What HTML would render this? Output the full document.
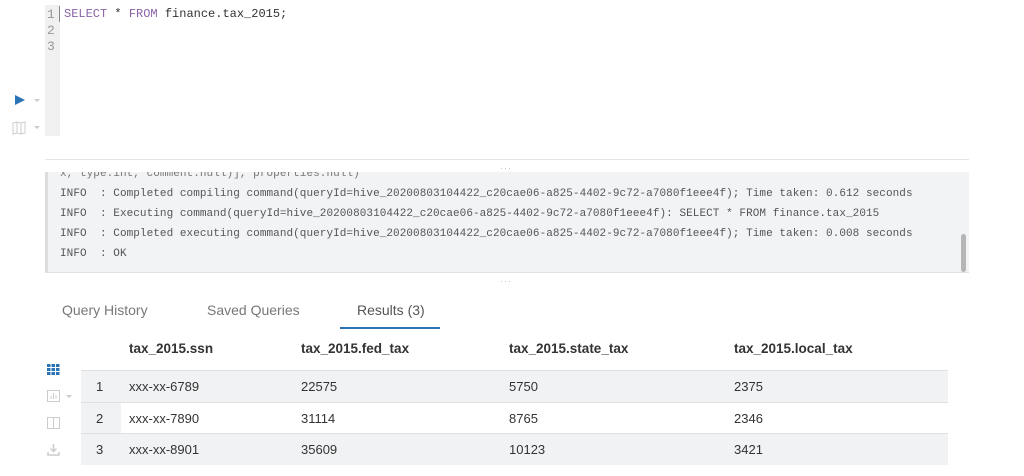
<!DOCTYPE html>
<html><head><style>
body{margin:0;width:1024px;height:476px;background:#fff;position:relative;overflow:hidden;font-family:"Liberation Sans",sans-serif}
.a{position:absolute}
.mono{font-family:"Liberation Mono",monospace}
.log div{position:absolute;left:12px;font-size:11px;letter-spacing:0.06px;color:#555;white-space:pre}
.row{position:absolute;left:81px;width:867px;height:31px;font-size:13px;color:#333}
.row span{position:absolute;top:8px}
</style></head><body>
<div class="a" style="left:45px;top:5px;width:15px;height:131px;background:#f0f0f0"></div>
<div class="a" style="left:59px;top:6px;width:1px;height:16px;background:#888"></div>
<div class="a mono" style="left:47px;top:7px;font-size:13px;line-height:16px;color:#999">1<br>2<br>3</div>
<div class="a mono" style="left:64px;top:7px;font-size:12px;color:#333;white-space:pre"><span style="color:#8a62a6">SELECT</span> * <span style="color:#8a62a6">FROM</span> finance.tax_2015;</div>
<svg class="a" style="left:14px;top:94px" width="28" height="12"><path d="M1 1 L11 6 L1 11Z" fill="#2a73b5"/><path d="M20 5 L26 5 L23 8Z" fill="#ccc"/></svg>
<svg class="a" style="left:12px;top:121px" width="30" height="14"><path d="M1 2 L5 1 L9 2 L13 1 L13 12 L9 13 L5 12 L1 13Z M5 1 L5 12 M9 2 L9 13" fill="none" stroke="#ccc"/><path d="M22 5 L28 5 L25 8Z" fill="#ccc"/></svg>
<div class="a" style="left:45px;top:159px;width:924px;height:1px;background:#e6e6e6"></div>
<div class="a" style="left:500px;top:163px;font-size:9px;color:#bbb;letter-spacing:1px">···</div>
<div class="a log mono" style="left:45px;top:172px;width:924px;height:100px;background:#f2f3f5;border-left:3px solid #ddd;overflow:hidden;box-sizing:border-box">
<div style="top:-4px;color:#777">x, type:int, comment:null)], properties:null)</div>
<div style="top:16px">INFO  : Completed compiling command(queryId=hive_20200803104422_c20cae06-a825-4402-9c72-a7080f1eee4f); Time taken: 0.612 seconds</div>
<div style="top:36px">INFO  : Executing command(queryId=hive_20200803104422_c20cae06-a825-4402-9c72-a7080f1eee4f): SELECT * FROM finance.tax_2015</div>
<div style="top:56px">INFO  : Completed executing command(queryId=hive_20200803104422_c20cae06-a825-4402-9c72-a7080f1eee4f); Time taken: 0.008 seconds</div>
<div style="top:76px">INFO  : OK</div>
<div style="left:913px;top:62px;width:5px;height:38px;background:#b5b5b5;border-radius:3px;position:absolute"></div>
</div>
<div class="a" style="left:45px;top:272px;width:924px;height:1px;background:#e2e2e2"></div>
<div class="a" style="left:500px;top:276px;font-size:9px;color:#bbb;letter-spacing:1px">···</div>
<div class="a" style="left:62px;top:302px;font-size:14px;color:#777">Query History</div>
<div class="a" style="left:207px;top:302px;font-size:14px;color:#777">Saved Queries</div>
<div class="a" style="left:357px;top:302px;font-size:14px;color:#555">Results (3)</div>
<div class="a" style="left:340px;top:327px;width:100px;height:2px;background:#2a73b5"></div>
<div class="a" style="top:341px;left:129px;font-size:13.5px;font-weight:bold;color:#333">tax_2015.ssn</div>
<div class="a" style="top:341px;left:301px;font-size:13.5px;font-weight:bold;color:#333">tax_2015.fed_tax</div>
<div class="a" style="top:341px;left:509px;font-size:13.5px;font-weight:bold;color:#333">tax_2015.state_tax</div>
<div class="a" style="top:341px;left:734px;font-size:13.5px;font-weight:bold;color:#333">tax_2015.local_tax</div>
<div class="row" style="top:370px;background:#f1f2f3;border-top:1px solid #e0e0e0"><span style="left:15px">1</span><span style="left:48px">xxx-xx-6789</span><span style="left:220px">22575</span><span style="left:428px">5750</span><span style="left:653px">2375</span></div>
<div class="row" style="top:402px;background:#fff;border-top:1px solid #e0e0e0"><div style="position:absolute;left:0;top:0;width:40px;height:31px;background:#f1f2f3"></div><span style="left:15px">2</span><span style="left:48px">xxx-xx-7890</span><span style="left:220px">31114</span><span style="left:428px">8765</span><span style="left:653px">2346</span></div>
<div class="row" style="top:433px;background:#f1f2f3;border-top:1px solid #e0e0e0"><span style="left:15px">3</span><span style="left:48px">xxx-xx-8901</span><span style="left:220px">35609</span><span style="left:428px">10123</span><span style="left:653px">3421</span></div>
<svg class="a" style="left:47px;top:364px" width="14" height="12"><g fill="#2a73b5"><rect x="0" y="0" width="3.5" height="3"/><rect x="4.5" y="0" width="3.5" height="3"/><rect x="9" y="0" width="3.5" height="3"/><rect x="0" y="4" width="3.5" height="3"/><rect x="4.5" y="4" width="3.5" height="3"/><rect x="9" y="4" width="3.5" height="3"/><rect x="0" y="8" width="3.5" height="3"/><rect x="4.5" y="8" width="3.5" height="3"/><rect x="9" y="8" width="3.5" height="3"/></g></svg>
<svg class="a" style="left:47px;top:390px" width="28" height="12"><rect x="0.5" y="0.5" width="12" height="11" fill="none" stroke="#ccc"/><path d="M4 9V6M6.5 9V3M9 9V5" stroke="#ccc"/><path d="M19 5L25 5L22 8Z" fill="#ccc"/></svg>
<svg class="a" style="left:47px;top:417px" width="14" height="12"><rect x="0.5" y="0.5" width="12" height="11" fill="none" stroke="#ccc"/><path d="M6.5 0.5V11.5" stroke="#ccc"/></svg>
<svg class="a" style="left:47px;top:444px" width="14" height="12"><path d="M6.5 0V7M3.5 4.5L6.5 7.5L9.5 4.5M1 8V11H12V8" fill="none" stroke="#ccc" stroke-width="1.5"/></svg>
</body></html>
